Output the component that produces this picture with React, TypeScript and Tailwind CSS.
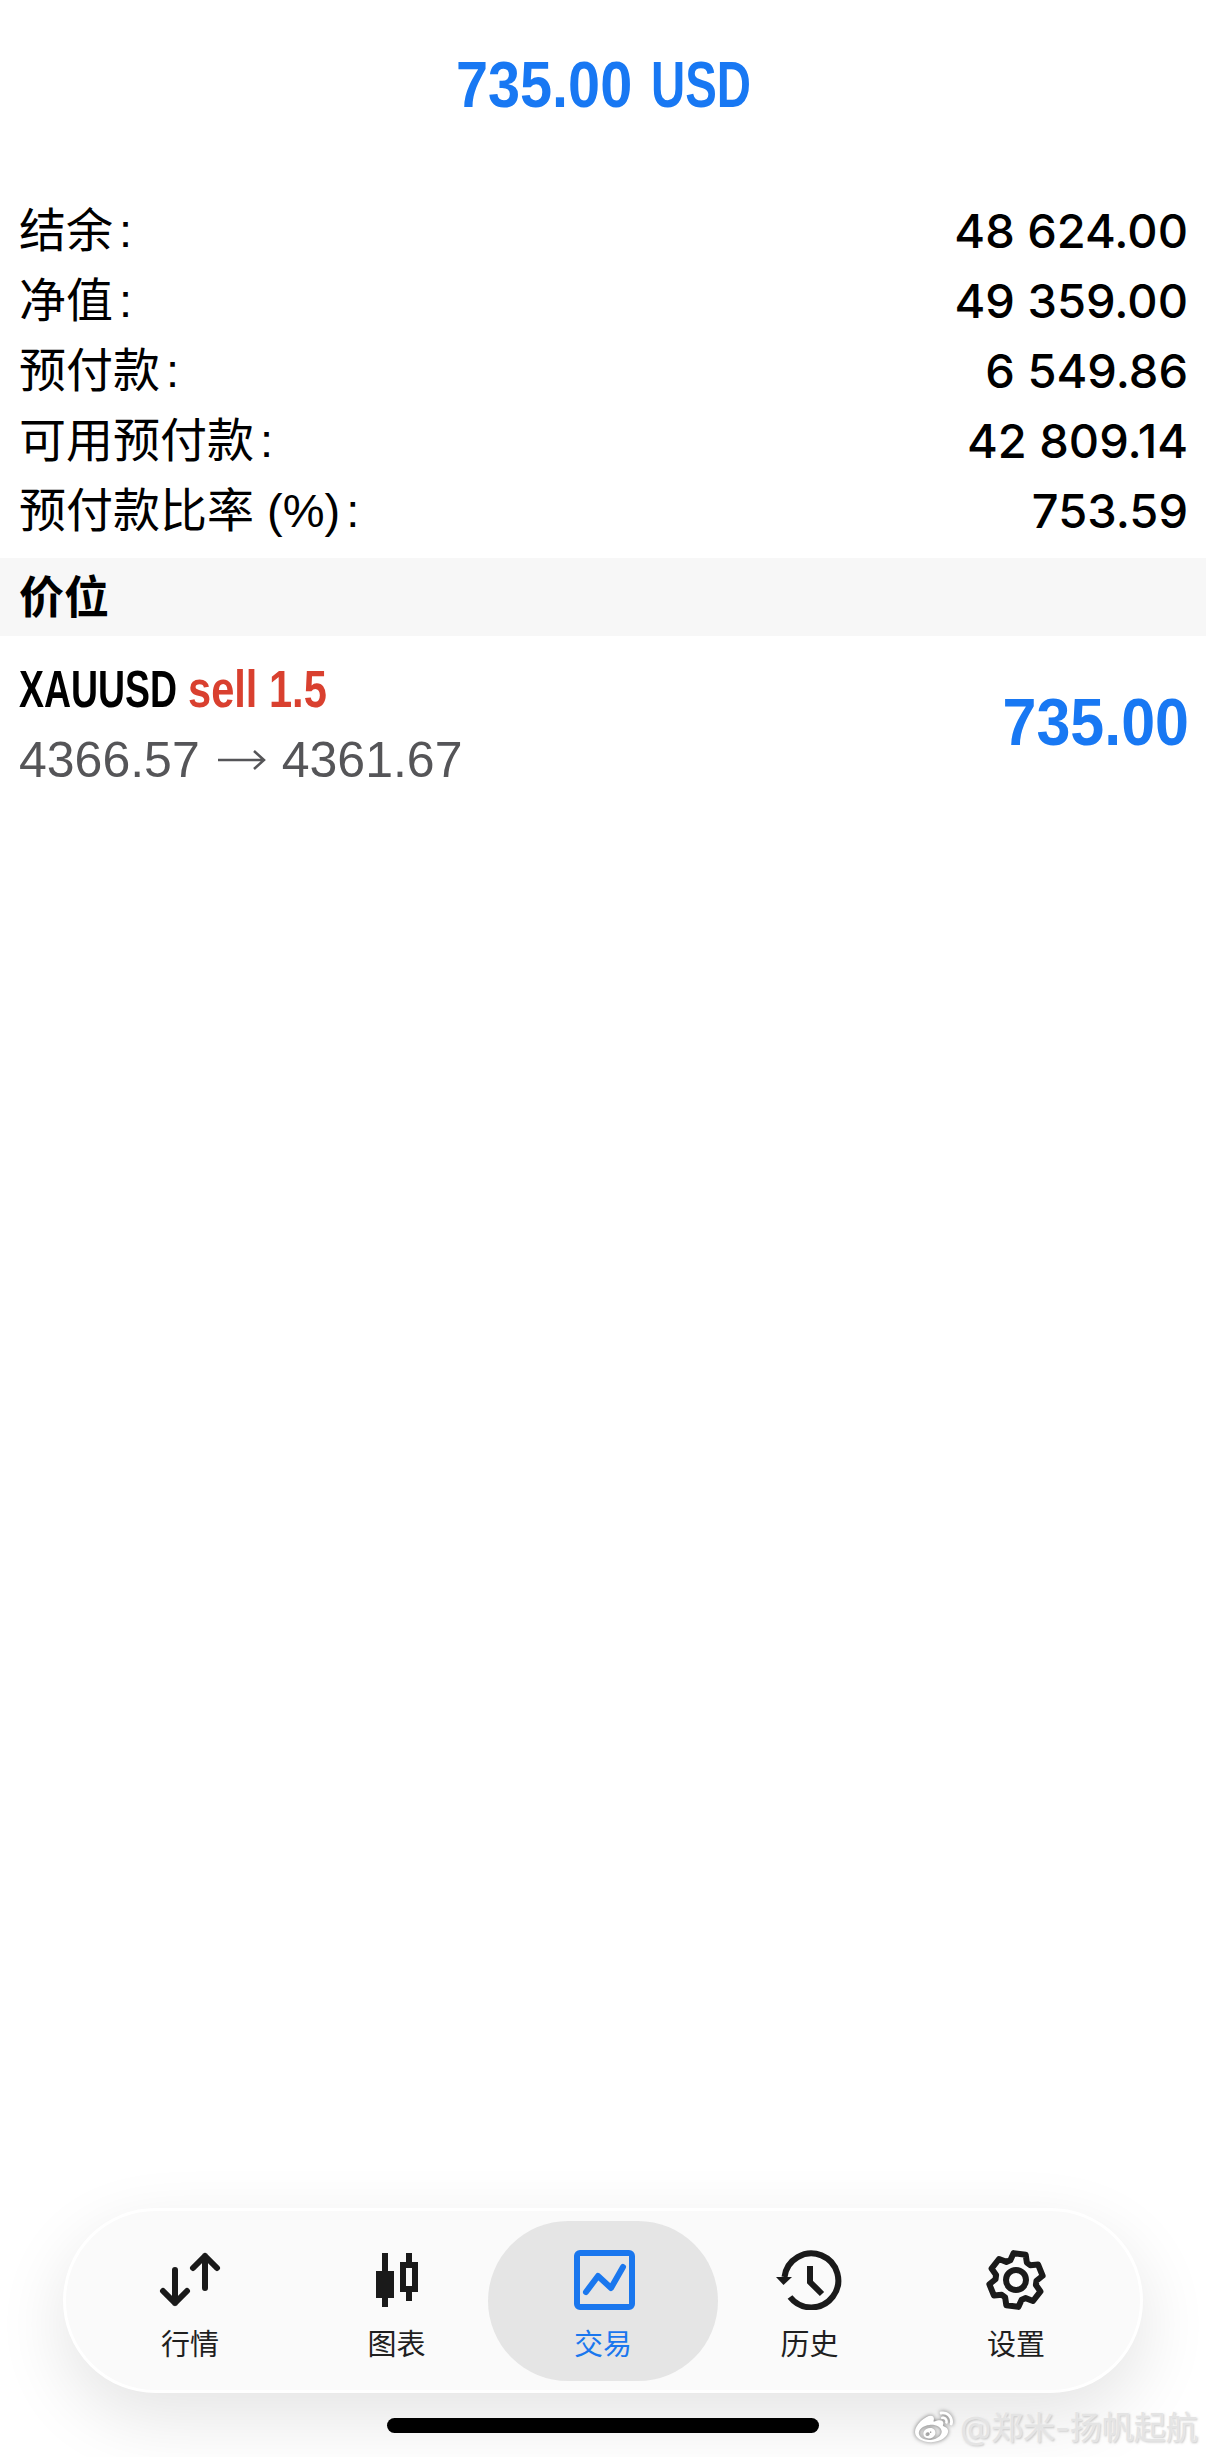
import { FaWeibo } from "react-icons/fa";

const cjk = "font-['Inter','Noto_Sans_CJK_SC',sans-serif]";
const helv = "font-['Liberation_Sans','Noto_Sans_CJK_SC',sans-serif]";

const rows = [
    ["结余", "48 624.00"],
    ["净值", "49 359.00"],
    ["预付款", "6 549.86"],
    ["可用预付款", "42 809.14"],
    ["预付款比率 (%)", "753.59"],
];

// six teeth, turned a little like the one in the tab bar
function gearPath() {
    const cx = 33;
    const cy = 30;
    const parts: string[] = [];
    for (let i = 0; i < 6; i++) {
        const a = 8 + i * 60;
        const pts: [number, number][] = [
            [a - 24, 20.5],
            [a - 13, 27],
            [a + 13, 27],
            [a + 24, 20.5],
        ];
        for (const [deg, r] of pts) {
            const t = ((deg - 90) * Math.PI) / 180;
            parts.push(`${(cx + r * Math.cos(t)).toFixed(2)} ${(cy + r * Math.sin(t)).toFixed(2)}`);
        }
    }
    return "M" + parts.join("L") + "Z";
}

function ArrowsIcon() {
    return (
        <svg width="64" height="60" viewBox="0 0 64 60" fill="none" stroke="#1a1a1a" strokeWidth="6" strokeLinecap="round" strokeLinejoin="round">
            <path d="M17 20V53M5 41L17 53L29 41" />
            <path d="M47 38V6M35 18L47 6L59 18" />
        </svg>
    );
}

function CandlesIcon() {
    return (
        <svg width="64" height="60" viewBox="0 0 64 60" fill="#1a1a1a">
            <path d="M17 3h6v18h6v27h-6v9h-6v-9h-6V21h6z" />
            <path fillRule="evenodd" d="M41 3h6v9h6v30h-6v9h-6v-9h-6V12h6zM41 18v18h6V18z" />
        </svg>
    );
}

function TradeIcon() {
    return (
        <svg width="64" height="60" viewBox="0 0 64 60" fill="none" stroke="#1a77ee" strokeWidth="6" strokeLinecap="round" strokeLinejoin="round">
            <rect x="6" y="3" width="55" height="54" rx="3" />
            <path d="M15 42L27 26L40 38L52 17" />
        </svg>
    );
}

function HistoryIcon() {
    return (
        <svg width="68" height="60" viewBox="0 0 68 60" fill="none" stroke="#1a1a1a" strokeWidth="6">
            <path d="M14 47A27 27 0 1 0 8.5 27" />
            <path d="M0 27H16L7.5 35Z" fill="#1a1a1a" stroke="none" />
            <path d="M34 16V32L46 44" />
        </svg>
    );
}

function GearIcon() {
    return (
        <svg width="66" height="60" viewBox="0 0 66 60" fill="none" stroke="#1a1a1a" strokeWidth="6" strokeLinejoin="round">
            <path d={gearPath()} />
            <circle cx="33" cy="30" r="10" />
        </svg>
    );
}

const tabs = [
    { label: "行情", icon: <ArrowsIcon /> },
    { label: "图表", icon: <CandlesIcon /> },
    { label: "交易", icon: <TradeIcon />, active: true },
    { label: "历史", icon: <HistoryIcon /> },
    { label: "设置", icon: <GearIcon /> },
];

export default function App() {
    return (
        <div className={`relative flex h-[2457px] w-full flex-col overflow-hidden bg-white ${cjk}`}>
            <header className={`flex h-[170px] items-center justify-center gap-[19px] text-[64px] leading-none font-bold whitespace-nowrap text-[#1878f3] ${helv}`}>
                <span className="inline-block w-[196px] origin-left scale-x-[0.9]">735.00</span>
                <span className="-ml-[20px] inline-block w-[100px] origin-left scale-x-[0.74]">USD</span>
            </header>

            <section className="mt-[25px] mb-[13px] pr-[18px] pl-[19px]">
                {rows.map(([label, value]) => (
                    <div key={label} className="flex h-[70px] items-center justify-between leading-none text-black">
                        <span className={`text-[47px] ${helv}`}>
                            {label}
                            <span className="ml-[6px]">:</span>
                        </span>
                        <span className="text-[47px] font-medium">{value}</span>
                    </div>
                ))}
            </section>

            <div className="flex h-[78px] items-center bg-[#f7f7f7] px-[19px] text-[45px] leading-none font-bold text-black">价位</div>

            <section className="flex h-[170px] items-center justify-between pr-[17px] pl-[19px]">
                <div className="flex flex-col gap-[20px] pt-[6px]">
                    <div className={`flex text-[52px] leading-[52px] font-bold whitespace-nowrap ${helv}`}>
                        <span className="inline-block w-[158px] origin-left scale-x-[0.72] text-black">XAUUSD</span>
                        <span className="ml-[11px] inline-block w-[139px] origin-left scale-x-[0.8] text-[#d9402f]">sell 1.5</span>
                    </div>
                    <div className={`flex items-center text-[50px] leading-[50px] text-[#555558] ${helv}`}>
                        <span>4366.57</span>
                        <svg className="mr-[16px] ml-[18px]" width="48" height="24" viewBox="0 0 48 24" fill="none" stroke="#555558" strokeWidth="2.5">
                            <path d="M0 12H46M36 3L46 12L36 21" />
                        </svg>
                        <span>4361.67</span>
                    </div>
                </div>
                <span className={`inline-block w-[205px] origin-right scale-x-[0.91] text-right text-[67px] leading-none font-bold whitespace-nowrap text-[#1878f3] ${helv}`}>
                    735.00
                </span>
            </section>

            <nav className="mt-auto mb-[64px] ml-[63px] flex h-[185px] w-[1080px] items-center justify-center rounded-full border-[3px] border-white bg-[#fafafa] shadow-[0_24px_70px_rgba(0,0,0,0.11)]">
                {tabs.map((tab) => (
                    <div
                        key={tab.label}
                        className={`flex h-[160px] shrink-0 flex-col items-center gap-[19px] rounded-full pt-[29px] ${tab.active ? "mx-[-11.75px] w-[230px] bg-[#e5e5e5] text-[#1a77ee]" : "w-[206.5px] text-[#1f1f1f]"}`}
                    >
                        {tab.icon}
                        <span className="text-[29px] leading-[32px]">{tab.label}</span>
                    </div>
                ))}
            </nav>

            <div className="absolute top-[2418px] left-[387px] h-[15px] w-[432px] rounded-full bg-black" />

            <div className="absolute top-[2406px] left-[912px] flex items-center gap-[4px] text-[32px] leading-[44px] text-[#e4e4e4] [text-shadow:0_0_2px_rgba(255,255,255,1),1px_1px_2px_rgba(120,120,120,0.5)]">
                <FaWeibo className="h-[38px] w-[44px] text-white drop-shadow-[0_0_2px_rgba(0,0,0,0.55)]" />
                <span>@郑米-扬帆起航</span>
            </div>
        </div>
    );
}
